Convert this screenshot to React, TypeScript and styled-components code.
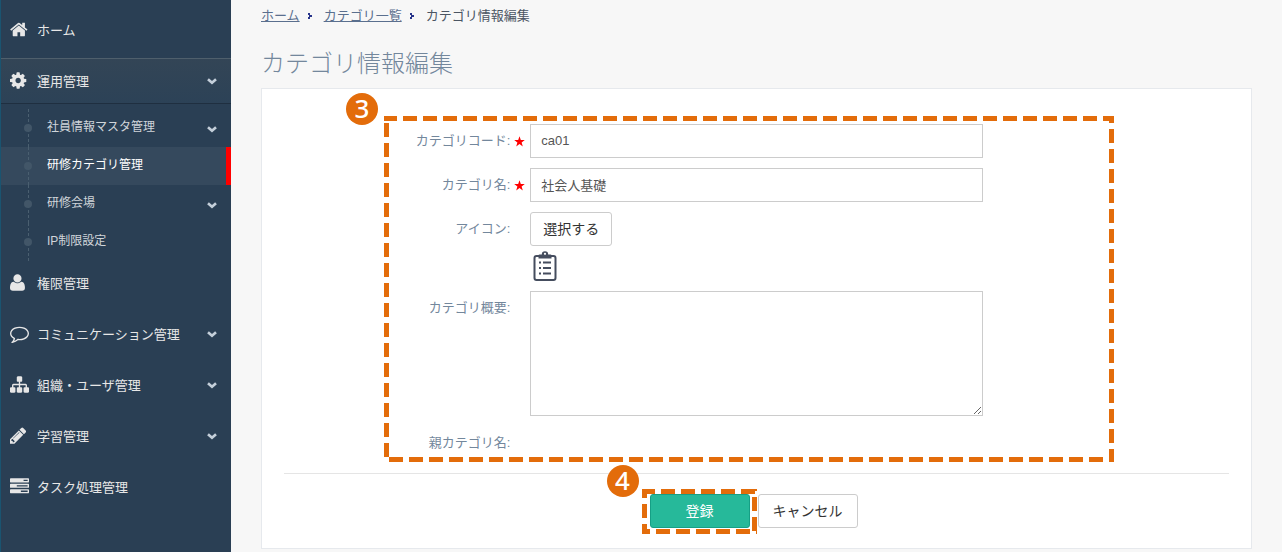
import React from "react";
import styled, { createGlobalStyle, css } from "styled-components";

const GlobalStyle = createGlobalStyle`
  *, *::before, *::after { box-sizing: border-box; }
  body {
    margin: 0;
    background: #f7f7f7;
    color: #73879c;
    font-family: "Liberation Sans", "Noto Sans CJK JP", sans-serif;
    font-size: 13px;
    line-height: 20px;
  }
  ul, ol { list-style: none; margin: 0; padding: 0; }
  button, input, textarea { font: inherit; }
`;

const ORANGE = "#e36c0a";

/* ---------- icons ---------- */

type Glyph = { d: string; x?: number };

const glyphs: Record<string, Glyph> = {
  home: {
    x: 64,
    d: "M1472 992v480q0 26-19 45t-45 19h-384v-384h-256v384h-384q-26 0-45-19t-19-45v-480q0-1 .5-3t.5-3l575-474 575 474q1 2 1 6zm223-69l-62 74q-8 9-21 11h-3q-13 0-21-7l-692-577-692 577q-12 8-24 7-13-2-21-11l-62-74q-8-10-7-23.5t11-21.5l719-599q32-26 76-26t76 26l244 204v-195q0-14 9-23t23-9h192q14 0 23 9t9 23v408l219 182q10 8 11 21.5t-7 23.5z",
  },
  cog: {
    x: 128,
    d: "M1152 896q0-106-75-181t-181-75-181 75-75 181 75 181 181 75 181-75 75-181zm512-109v222q0 12-8 23t-20 13l-185 28q-19 54-39 91 35 50 107 138 10 12 10 25t-9 23q-27 37-99 108t-94 71q-12 0-26-9l-138-108q-44 23-91 38-16 136-29 186-7 28-36 28h-222q-14 0-24.5-8.5t-11.5-21.5l-28-184q-49-16-90-37l-141 107q-10 9-25 9-14 0-25-11-126-114-165-168-7-10-7-23 0-12 8-23 15-21 51-66.5t54-70.5q-27-50-41-99l-183-27q-13-2-21-12.5t-8-23.5v-222q0-12 8-23t19-13l186-28q14-46 39-92-40-57-107-138-10-12-10-24 0-10 9-23 26-36 98.5-107.5t94.5-71.5q13 0 26 10l138 107q44-23 91-38 16-136 29-186 7-28 36-28h222q14 0 24.5 8.5t11.5 21.5l28 184q49 16 90 37l142-107q9-9 24-9 13 0 25 10 129 119 165 170 7 8 7 22 0 12-8 23-15 21-51 66.5t-54 70.5q26 50 41 98l183 28q13 2 21 12.5t8 23.5z",
  },
  user: {
    x: 192,
    d: "M1600 1405q0 120-73 189.5t-194 69.5h-874q-121 0-194-69.5t-73-189.5q0-53 3.5-103.5t14-109 26.5-108.5 43-97.5 62-81 85.5-53.5 111.5-20q9 0 42 21.5t74.5 48 108 48 133.5 21.5 133.5-21.5 108-48 74.5-48 42-21.5q61 0 111.5 20t85.5 53.5 62 81 43 97.5 26.5 108.5 14 109 3.5 103.5zm-320-893q0 159-112.5 271.5t-271.5 112.5-271.5-112.5-112.5-271.5 112.5-271.5 271.5-112.5 271.5 112.5 112.5 271.5z",
  },
  comment: {
    d: "M896 384q-204 0-381.5 69.5t-282 187.5-104.5 255q0 112 71.5 213.5t201.5 175.5l87 50-27 96q-24 91-70 172 152-63 275-171l43-38 57 6q69 8 130 8 204 0 381.5-69.5t282-187.5 104.5-255-104.5-255-282-187.5-381.5-69.5zm896 512q0 174-120 321.5t-326 233-450 85.5q-70 0-145-8-198 175-460 242-49 14-114 22h-5q-15 0-27-10.5t-16-27.5v-1q-3-4-.5-12t2-10 4.5-9.5l6-9 7-8.500 8-9q7-8 31-34.5t34.5-38 31-39.5 32.5-51 27-59 26-76q-157-89-247.5-220t-90.5-281q0-174 120-321.5t326-233 450-85.5 450 85.5 326 233 120 321.5z",
  },
  sitemap: {
    d: "M1792 1248v320q0 40-28 68t-68 28h-320q-40 0-68-28t-28-68v-320q0-40 28-68t68-28h96v-192h-512v192h96q40 0 68 28t28 68v320q0 40-28 68t-68 28h-320q-40 0-68-28t-28-68v-320q0-40 28-68t68-28h96v-192h-512v192h96q40 0 68 28t28 68v320q0 40-28 68t-68 28h-320q-40 0-68-28t-28-68v-320q0-40 28-68t68-28h96v-192q0-52 38-90t90-38h512v-192h-96q-40 0-68-28t-28-68v-320q0-40 28-68t68-28h320q40 0 68 28t28 68v320q0 40-28 68t-68 28h-96v192h512q52 0 90 38t38 90v192h96q40 0 68 28t28 68z",
  },
  pencil: {
    x: 128,
    d: "M491 1536l91-91-235-235-91 91v107h128v128h107zm523-928q0-22-22-22-10 0-17 7l-542 542q-7 7-7 17 0 22 22 22 10 0 17-7l542-542q7-7 7-17zm-54-192l416 416-832 832h-416v-416zm683 96q0 53-37 90l-166 166-416-416 166-165q36-38 90-38 53 0 91 38l235 234q37 39 37 91z",
  },
  tasks: {
    d: "M1024 1408h640v-128h-640v128zm-384-512h1024v-128h-1024v128zm640-512h384v-128h-384v128zm512 832v256q0 26-19 45t-45 19h-1664q-26 0-45-19t-19-45v-256q0-26 19-45t45-19h1664q26 0 45 19t19 45zm0-512v256q0 26-19 45t-45 19h-1664q-26 0-45-19t-19-45v-256q0-26 19-45t45-19h1664q26 0 45 19t19 45zm0-512v256q0 26-19 45t-45 19h-1664q-26 0-45-19t-19-45v-256q0-26 19-45t45-19h1664q26 0 45 19t19 45z",
  },
};

const NavIcon = styled.svg`
  width: 19px;
  height: 19px;
  margin-bottom: 3px;
  fill: currentColor;
`;

const NavGlyph = ({ name }: { name: string }) => (
  <NavIcon viewBox={`${glyphs[name].x ?? 0} 0 1792 1792`} aria-hidden="true">
    <path d={glyphs[name].d} />
  </NavIcon>
);

const Chevron = () => (
  <svg width="10" height="7" viewBox="0 0 10 7" fill="none" stroke="#c4cfda" strokeWidth="2.6" aria-hidden="true">
    <path d="M1 1.2 L5 4.800 L9 1.2" />
  </svg>
);

const CrumbArrow = () => (
  <svg width="4" height="6" viewBox="0 0 4 6" fill="#27348b" aria-hidden="true">
    <path d="M0 0h2v2h2v2h-2v2h-2v-2h1v-2h-1z" />
  </svg>
);

const Star = () => (
  <svg width="11" height="11" viewBox="0 0 11 11" fill="#f00" role="img" aria-label="必須">
    <path d="M5.5 0.3 L6.8 4.1 H10.8 L7.6 6.5 L8.8 10.4 L5.5 8 L2.2 10.4 L3.4 6.5 L0.2 4.1 H4.2 Z" />
  </svg>
);

const Clipboard = () => (
  <svg width="30" height="32" viewBox="0 0 30 32" fill="none" stroke="#454d5e" aria-hidden="true">
    <rect x="4.500" y="6" width="21" height="24" rx="2" strokeWidth="2" />
    <path d="M8.500 8.500V5.500q0-1 1-1h2.300a3.200 3.200 0 0 1 6.400 0h2.300q1 0 1 1v3z" fill="#454d5e" stroke="none" />
    <circle cx="15" cy="3.800" r="1.100" fill="#fff" stroke="none" />
    <path d="M13 12.5h8M13 18h8M13 23.5h8M9 12.5h2M9 18h2M9 23.5h2" strokeWidth="2" />
  </svg>
);

/* ---------- sidebar ---------- */

const Page = styled.div`
  display: flex;
  min-height: 100vh;
`;

const Sidebar = styled.nav`
  flex: 0 0 231px;
  padding-top: 8px;
  background: #2a3f54;
  border-left: 1px solid #1a5470;
`;

const NavList = styled.ul`
  display: flex;
  flex-direction: column;
  gap: 6px;
`;

const NavItem = styled.li<{ $open?: boolean }>`
  ${(p) => p.$open && css`margin-bottom: -6px;`}
`;

const NavLink = styled.a<{ $open?: boolean }>`
  display: grid;
  grid-template-columns: 27px 1fr 10px;
  align-items: center;
  height: 45px;
  padding: 0 14px 0 9px;
  color: #e7e7e7;
  text-decoration: none;
  ${(p) =>
    p.$open &&
    css`
      background: linear-gradient(#334556, #2c4257);
      box-shadow: 0 -1px #4f5f6c, inset 0 -1px #1f2f40;
    `}
`;

const SubList = styled.ul`
  padding: 5px 0 0;
`;

const SubItem = styled.li`
  position: relative;
  &::before {
    content: "";
    position: absolute;
    left: 27px;
    top: 0;
    bottom: 0;
    border-left: 1px dashed #4a5f70;
  }
  &::after {
    content: "";
    position: absolute;
    left: 23px;
    top: 15px;
    width: 8px;
    height: 8px;
    border-radius: 50%;
    background: #425668;
  }
`;

const SubLink = styled.a<{ $current?: boolean }>`
  display: flex;
  align-items: center;
  justify-content: space-between;
  height: 38px;
  padding: 0 14px 2px 46px;
  color: ${(p) => (p.$current ? "#fff" : "#d0d5da")};
  font-size: 12px;
  text-decoration: none;
  ${(p) =>
    p.$current &&
    css`
      background: #35495d;
      border-right: 5px solid #f00;
    `}
  svg { margin-top: 4px; }
`;

/* ---------- main column ---------- */

const Main = styled.main`
  flex: 1;
  min-width: 0;
  padding: 6px 30px 3px;
`;

const Crumbs = styled.ol`
  display: flex;
  color: #4b5563;
  li { display: flex; align-items: center; }
  svg { margin: 0 12px 0 8px; }
  a { color: #5a6f8e; }
`;

const Title = styled.h1`
  margin: 22px 0 9px;
  font-size: 24px;
  font-weight: 300;
  line-height: 31px;
`;

const Panel = styled.form`
  padding: 27px 22px 20px;
  background: #fff;
  border: 1px solid #e6e9ed;
`;

const Fields = styled.div`
  position: relative;
  display: flex;
  flex-direction: column;
  gap: 10px;
  padding: 8px 0 10px;
`;

const Field = styled.div`
  display: grid;
  grid-template-columns: calc(25% - 10px) 20px calc(50% - 20px);
  align-items: start;
`;

const labelText = css`
  padding-top: 8px;
  line-height: 18px;
  text-align: right;
`;
const Label = styled.label`${labelText}`;
const LabelText = styled.span`${labelText}`;

const Required = styled.span`
  display: flex;
  align-items: center;
  height: 34px;
  padding-left: 4px;
`;

const controlBox = css`
  display: block;
  width: 100%;
  padding: 5px 10px 7px;
  background: #fff;
  border: 1px solid #ccc;
  border-radius: 0;
  color: #555;
`;
const TextInput = styled.input`${controlBox} height: 34px;`;
const TextArea = styled.textarea`${controlBox} height: 125px; resize: vertical;`;

const Button = styled.button<{ $primary?: boolean; $wide?: boolean }>`
  height: 34px;
  width: ${(p) => (p.$wide ? "100px" : "82px")};
  padding: 0;
  border: 1px solid ${(p) => (p.$primary ? "#169f85" : "#ccc")};
  border-radius: 3px;
  background: ${(p) => (p.$primary ? "#26b99a" : "#fff")};
  color: ${(p) => (p.$primary ? "#fff" : "#333")};
  font-size: 14px;
  line-height: 20px;
`;

const IconPreview = styled.div`
  height: 35px;
  padding-top: 4px;
`;

const Actions = styled.div`
  display: flex;
  justify-content: center;
  gap: 8px;
  margin-top: 11px;
  padding: 20px 6px 0 0;
  border-top: 1px solid #e5e5e5;
`;

const Marked = styled.div`
  position: relative;
`;

/* ---------- callouts drawn over the form ---------- */

/* Where the dash pattern starts on each side of the frame. */
type Phases = { $top: number; $right: number; $bottom: number; $left: number };

const DashedFrame = styled.div<Phases>`
  position: absolute;
  pointer-events: none;
  background-image: linear-gradient(90deg, ${ORANGE} 14px, transparent 14px),
    linear-gradient(${ORANGE} 14px, transparent 14px),
    linear-gradient(90deg, ${ORANGE} 14px, transparent 14px),
    linear-gradient(${ORANGE} 14px, transparent 14px);
  background-size: 20px 5px, 5px 20px, 20px 5px, 5px 20px;
  background-repeat: repeat-x, repeat-y, repeat-x, repeat-y;
  background-position: ${(p) =>
    `${p.$top}px 0, right 0 top ${p.$right}px, ${p.$bottom}px 100%, 0 ${p.$left}px`};
`;

const FieldsFrame = styled(DashedFrame)`
  inset: 0 115px 0 100px;
`;

const ButtonFrame = styled(DashedFrame)`
  inset: -5px -7px -6px -8px;
`;

const Badge = styled.span`
  position: absolute;
  left: -38px;
  top: -23px;
  width: 32px;
  height: 32px;
  border-radius: 50%;
  background: ${ORANGE};
  color: #fff;
  font-family: "Noto Sans", sans-serif;
  font-size: 26px;
  font-weight: 500;
  line-height: 30px;
  text-align: center;
`;

const ButtonBadge = styled(Badge)`
  left: -35px;
  top: -24px;
`;

/* ---------- data ---------- */

type Entry = { label: string; icon: string; expandable?: boolean };

const first: Entry = { label: "ホーム", icon: "home" };
const rest: Entry[] = [
  { label: "権限管理", icon: "user" },
  { label: "コミュニケーション管理", icon: "comment", expandable: true },
  { label: "組織・ユーザ管理", icon: "sitemap", expandable: true },
  { label: "学習管理", icon: "pencil", expandable: true },
  { label: "タスク処理管理", icon: "tasks" },
];
const subEntries = [
  { label: "社員情報マスタ管理", expandable: true },
  { label: "研修カテゴリ管理", current: true },
  { label: "研修会場", expandable: true },
  { label: "IP制限設定" },
];

const TopEntry = ({ label, icon, expandable, open }: Entry & { open?: boolean }) => (
  <NavLink href="#" $open={open}>
    <NavGlyph name={icon} />
    <span>{label}</span>
    {expandable && <Chevron />}
  </NavLink>
);

export default function App() {
  return (
    <Page>
      <GlobalStyle />
      <Sidebar>
        <NavList>
          <NavItem>
            <TopEntry {...first} />
          </NavItem>
          <NavItem $open>
            <TopEntry label="運用管理" icon="cog" expandable open />
            <SubList>
              {subEntries.map((s) => (
                <SubItem key={s.label}>
                  <SubLink href="#" $current={s.current}>
                    <span>{s.label}</span>
                    {s.expandable && <Chevron />}
                  </SubLink>
                </SubItem>
              ))}
            </SubList>
          </NavItem>
          {rest.map((e) => (
            <NavItem key={e.label}>
              <TopEntry {...e} />
            </NavItem>
          ))}
        </NavList>
      </Sidebar>

      <Main>
        <Crumbs>
          <li><a href="#">ホーム</a><CrumbArrow /></li>
          <li><a href="#">カテゴリ一覧</a><CrumbArrow /></li>
          <li>カテゴリ情報編集</li>
        </Crumbs>
        <Title>カテゴリ情報編集</Title>

        <Panel onSubmit={(e) => e.preventDefault()}>
          <Fields>
            <Field>
              <Label htmlFor="code">カテゴリコード:</Label>
              <Required><Star /></Required>
              <TextInput id="code" defaultValue="ca01" />
            </Field>
            <Field>
              <Label htmlFor="name">カテゴリ名:</Label>
              <Required><Star /></Required>
              <TextInput id="name" defaultValue="社会人基礎" />
            </Field>
            <Field>
              <Label htmlFor="icon">アイコン:</Label>
              <span />
              <div>
                <Button id="icon" type="button">選択する</Button>
                <IconPreview><Clipboard /></IconPreview>
              </div>
            </Field>
            <Field>
              <Label htmlFor="summary">カテゴリ概要:</Label>
              <span />
              <TextArea id="summary" />
            </Field>
            <Field>
              <LabelText>親カテゴリ名:</LabelText>
            </Field>
            <FieldsFrame $top={-1} $right={13} $bottom={5} $left={7}>
              <Badge>3</Badge>
            </FieldsFrame>
          </Fields>
          <Actions>
            <Marked>
              <Button type="submit" $primary $wide>登録</Button>
              <ButtonFrame $top={-1} $right={8} $bottom={14} $left={15}>
                <ButtonBadge>4</ButtonBadge>
              </ButtonFrame>
            </Marked>
            <Button type="button" $wide>キャンセル</Button>
          </Actions>
        </Panel>
      </Main>
    </Page>
  );
}
